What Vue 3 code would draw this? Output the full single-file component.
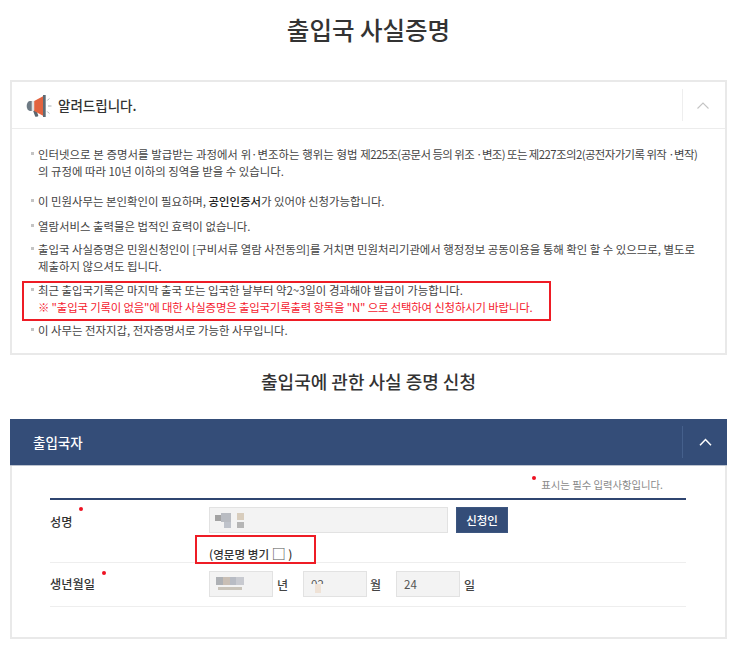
<script setup>
const notes = [
  { id: 2, text: '열람서비스 출력물은 법적인 효력이 없습니다.' },
  { id: 3, text: '출입국 사실증명은 민원신청인이 [구비서류 열람 사전동의]를 거치면 민원처리기관에서 행정정보 공동이용을 통해 확인 할 수 있으므로, 별도로 제출하지 않으셔도 됩니다.' }
]
</script>

<template>
  <main class="page">
    <h1 class="title">출입국 사실증명</h1>

    <section class="notice">
      <header class="notice-head">
        <div class="notice-title">
          <svg class="horn" width="26" height="24" viewBox="0 0 26 24" aria-hidden="true">
            <path d="M7 16.500l3.200-.6 2 5.300c.2.700-.1 1.200-.8 1.400l-1 .2c-.7.200-1.200-.1-1.400-.8z" fill="#5b6770"/>
            <path d="M6 7H4a3.300 5 0 0 0-3.300 5 3.300 5 0 0 0 3.300 5h2z" fill="#6d7a84"/>
            <path d="M5.700 7H8.200V17H5.700z" fill="#dfe2e4"/>
            <path d="M8.200 7L17 2.200V21.800L8.200 17z" fill="#e2633f"/>
            <path d="M17 1h2.700v22H17z" fill="#5d6b75"/>
            <path d="M21.300 6.500l2-2M22 12h3.500M21.300 17.500l2 2" stroke="#a9b1b7" stroke-width="1" fill="none"/>
          </svg>
          <span>알려드립니다.</span>
        </div>
        <div class="toggle">
          <svg width="12" height="7" viewBox="0 0 12 7" aria-hidden="true"><path d="M.5 6.500L6 1l5.500 5.500" fill="none" stroke="#c4c4c4" stroke-width="1.100"/></svg>
        </div>
      </header>
      <ul class="notes">
        <li class="note first"><span class="wide-words">인터넷으로 본 증명서를 발급받는 과정에서 위·변조하는 행위는 형법 </span><span class="tight">제225조(공문서 등의 위조 ·변조) 또는 제227조의2(공전자가기록 위작 ·변작)</span><br>의 규정에 따라 10년 이하의 징역을 받을 수 있습니다.</li>
        <li class="note">이 민원사무는 본인확인이 필요하며, <b>공인인증서</b>가 있어야 신청가능합니다.</li>
        <li v-for="n in notes" :key="n.id" class="note">{{ n.text }}</li>
        <li class="note marked">
          최근 출입국기록은 마지막 출국 또는 입국한 날부터 약2~3일이 경과해야 발급이 가능합니다.<br>
          <span class="red">※ "출입국 기록이 없음"에 대한 사실증명은 출입국기록출력 항목을 "N" 으로 선택하여 신청하시기 바랍니다.</span>
          <i class="mark notice-mark"></i>
        </li>
        <li class="note">이 사무는 전자지갑, 전자증명서로 가능한 사무입니다.</li>
      </ul>
    </section>

    <h2 class="subtitle">출입국에 관한 사실 증명 신청</h2>

    <section class="form-card">
      <header class="form-head">
        <span>출입국자</span>
        <div class="toggle dark">
          <svg width="13" height="8" viewBox="0 0 13 8" aria-hidden="true"><path d="M1 7.200L6.500 1.500 12 7.200" fill="none" stroke="#fff" stroke-width="1.500"/></svg>
        </div>
      </header>
      <div class="form-body">
        <p class="required"><i class="dot"></i>표시는 필수 입력사항입니다.</p>
        <div class="form-table">
          <div class="row row-name">
            <div class="label">성명<i class="dot"></i></div>
            <div class="field">
              <div class="line">
                <div class="input wide">
                  <svg width="40" height="16" viewBox="0 0 40 16" aria-hidden="true" class="blur">
                    <rect x="5" y="3" width="6" height="6" fill="#a3a3a3"/>
                    <rect x="11" y="1" width="10" height="9" fill="#b9bcc2"/>
                    <rect x="14" y="10" width="7" height="6" fill="#bfc3cb"/>
                    <rect x="27" y="1" width="7" height="7" fill="#d8cdbd"/>
                    <rect x="27" y="10" width="7" height="6" fill="#b5b5b5"/>
                  </svg>
                </div>
                <button class="btn" type="button">신청인</button>
              </div>
              <div class="eng">(영문명 병기 <span class="box">□</span> )<i class="mark eng-mark"></i></div>
            </div>
          </div>
          <div class="row row-birth">
            <div class="label">생년월일<i class="dot"></i></div>
            <div class="field dates">
              <div class="input small">
                <svg width="40" height="16" viewBox="0 0 40 16" aria-hidden="true" class="blur">
                  <rect x="6" y="1" width="7" height="8" fill="#aeb1b5"/>
                  <rect x="13" y="1" width="7" height="8" fill="#c9bfb5"/>
                  <rect x="20" y="1" width="6" height="8" fill="#b8bcc4"/>
                  <rect x="26" y="1" width="8" height="8" fill="#c8cad0"/>
                  <rect x="8" y="11" width="24" height="3" fill="#c9c4ba"/>
                </svg>
              </div>
              <span class="unit">년</span>
              <div class="input small text">02<i class="smudge"></i></div>
              <span class="unit short">월</span>
              <div class="input small text">24</div>
              <span class="unit">일</span>
            </div>
          </div>
        </div>
      </div>
    </section>
  </main>
</template>

<style scoped>
.page {
  width: 740px;
  height: 659px;
  box-sizing: border-box;
  padding: 0 13px 0 10px;
  font-family: "Noto Sans CJK KR", "Noto Sans", sans-serif;
  color: #333;
  overflow: hidden;
  background: #fff;
}
.title {
  margin: 0;
  height: 80px;
  padding-top: 12px;
  box-sizing: border-box;
  font-size: 24.500px;
  line-height: 36px;
  font-weight: 500;
  text-align: center;
  color: #333;
}
.notice {
  height: 275px;
  box-sizing: border-box;
  border: 2px solid #e9e9e9;
}
.notice-head {
  height: 47px;
  box-sizing: border-box;
  border-bottom: 1px solid #ececec;
  display: flex;
  align-items: center;
  justify-content: space-between;
}
.notice-title {
  display: flex;
  align-items: center;
  gap: 6px;
  padding-left: 14px;
  font-size: 13.500px;
  font-weight: 500;
  color: #333;
}
.horn { margin-top: 1px; }
.toggle {
  width: 43px;
  height: 32px;
  box-sizing: border-box;
  padding-right: 2px;
  display: flex;
  align-items: center;
  justify-content: center;
  border-left: 1px solid #eee;
}
.toggle.dark {
  width: 45px;
  padding-right: 0;
  border-left-color: #45608c;
}
.notes {
  list-style: none;
  margin: 0;
  padding: 17px 26px 0 26px;
}
.note {
  position: relative;
  font-size: 11.400px;
  line-height: 17px;
  color: #444;
  margin-bottom: 7px;
  word-break: keep-all;
}
.note:nth-child(2) { margin-bottom: 8px; }
.note:nth-child(3) { margin-bottom: 6px; }
.note.marked { margin-bottom: 6px; }
.note.first { margin-bottom: 13px; }
.note::before {
  content: "";
  position: absolute;
  left: -7px;
  top: 6px;
  width: 3px;
  height: 3px;
  background: #c4c4c4;
}
.note b { font-weight: 500; color: #222; }
.wide-words { word-spacing: 0.250px; }
.tight { letter-spacing: -0.560px; white-space: nowrap; }
.red { color: #f5212f; letter-spacing: -0.170px; }
.mark {
  position: absolute;
  border: 2px solid #ee1c25;
  pointer-events: none;
}
.notice-mark { left: -16px; top: -1px; width: 525px; height: 36px; }
.subtitle {
  margin: 0;
  height: 64px;
  padding-top: 13px;
  box-sizing: border-box;
  font-size: 18px;
  line-height: 27px;
  font-weight: 500;
  text-align: center;
  color: #333;
}
.form-card {
  height: 220px;
  box-sizing: border-box;
  border: 2px solid #e9e9e9;
  border-top: 0;
}
.form-head {
  height: 47px;
  box-sizing: border-box;
  margin: 0 -2px;
  background: #344d78;
  border-bottom: 1px solid #bcc3cf;
  color: #fff;
  font-size: 13.500px;
  font-weight: 500;
  display: flex;
  align-items: center;
  justify-content: space-between;
  padding-left: 23px;
}
.form-body { padding: 0 39px 0 38px; }
.required {
  margin: 0;
  height: 32px;
  padding-top: 11px;
  box-sizing: border-box;
  text-align: right;
  padding-right: 23px;
  font-size: 10.350px;
  line-height: 15px;
  color: #8a8a8a;
}
.required .dot { margin-right: 5px; transform: translateY(-9px); }
.dot {
  display: inline-block;
  width: 4px;
  height: 4px;
  border-radius: 50%;
  background: #ee1122;
}
.form-table { border-top: 2px solid #2f4570; }
.row {
  display: flex;
  border-bottom: 1px solid #eee;
}
.row-name { height: 62px; }
.row-birth { height: 43px; }
.label {
  width: 159px;
  box-sizing: border-box;
  font-size: 12.200px;
  font-weight: 500;
  color: #333;
}
.label .dot { margin-left: 7px; }
.row-name .label { padding-top: 13px; }
.row-name .dot { transform: translateY(-16px); }
.row-birth .label { padding-top: 12px; }
.row-birth .dot { margin-left: 7px; transform: translateY(-14px); }
.field { flex: 1; }
.line {
  display: flex;
  gap: 8px;
  padding-top: 7px;
}
.input {
  box-sizing: border-box;
  height: 26px;
  background: #f3f3f3;
  border: 1px solid #e2e2e2;
  display: flex;
  align-items: center;
}
.input.wide { width: 239px; }
.input.small { width: 64px; }
.input.text {
  position: relative;
  padding-left: 7px;
  font-size: 11.500px;
  color: #555;
}
.smudge {
  position: absolute;
  left: 6px;
  top: 12px;
  width: 14px;
  height: 9px;
  background: linear-gradient(90deg, #f3f3f3 0 35%, #efe2d6 35% 80%, #f3f3f3 80%);
  filter: blur(0.6px);
}
.blur { filter: blur(0.7px); flex: none; }
.btn {
  width: 52px;
  height: 26px;
  padding: 0;
  border: 1px solid #3d5680;
  background: #344d78;
  color: #fff;
  font: 500 11.500px "Noto Sans CJK KR", "Noto Sans", sans-serif;
}
.eng {
  position: relative;
  padding-top: 12px;
  font-size: 11.600px;
  line-height: 16px;
  font-weight: 500;
  color: #333;
}
.box { font-size: 14px; font-weight: 500; line-height: 16px; color: #555; }
.eng-mark { left: -14px; top: 2px; width: 117px; height: 25px; }
.dates {
  display: flex;
  align-items: center;
  padding-bottom: 1px;
}
.unit {
  width: 30px;
  box-sizing: border-box;
  padding-left: 4px;
  font-size: 12px;
  font-weight: 500;
  color: #444;
}
.unit.short { width: 29px; padding-left: 3px; }
</style>
